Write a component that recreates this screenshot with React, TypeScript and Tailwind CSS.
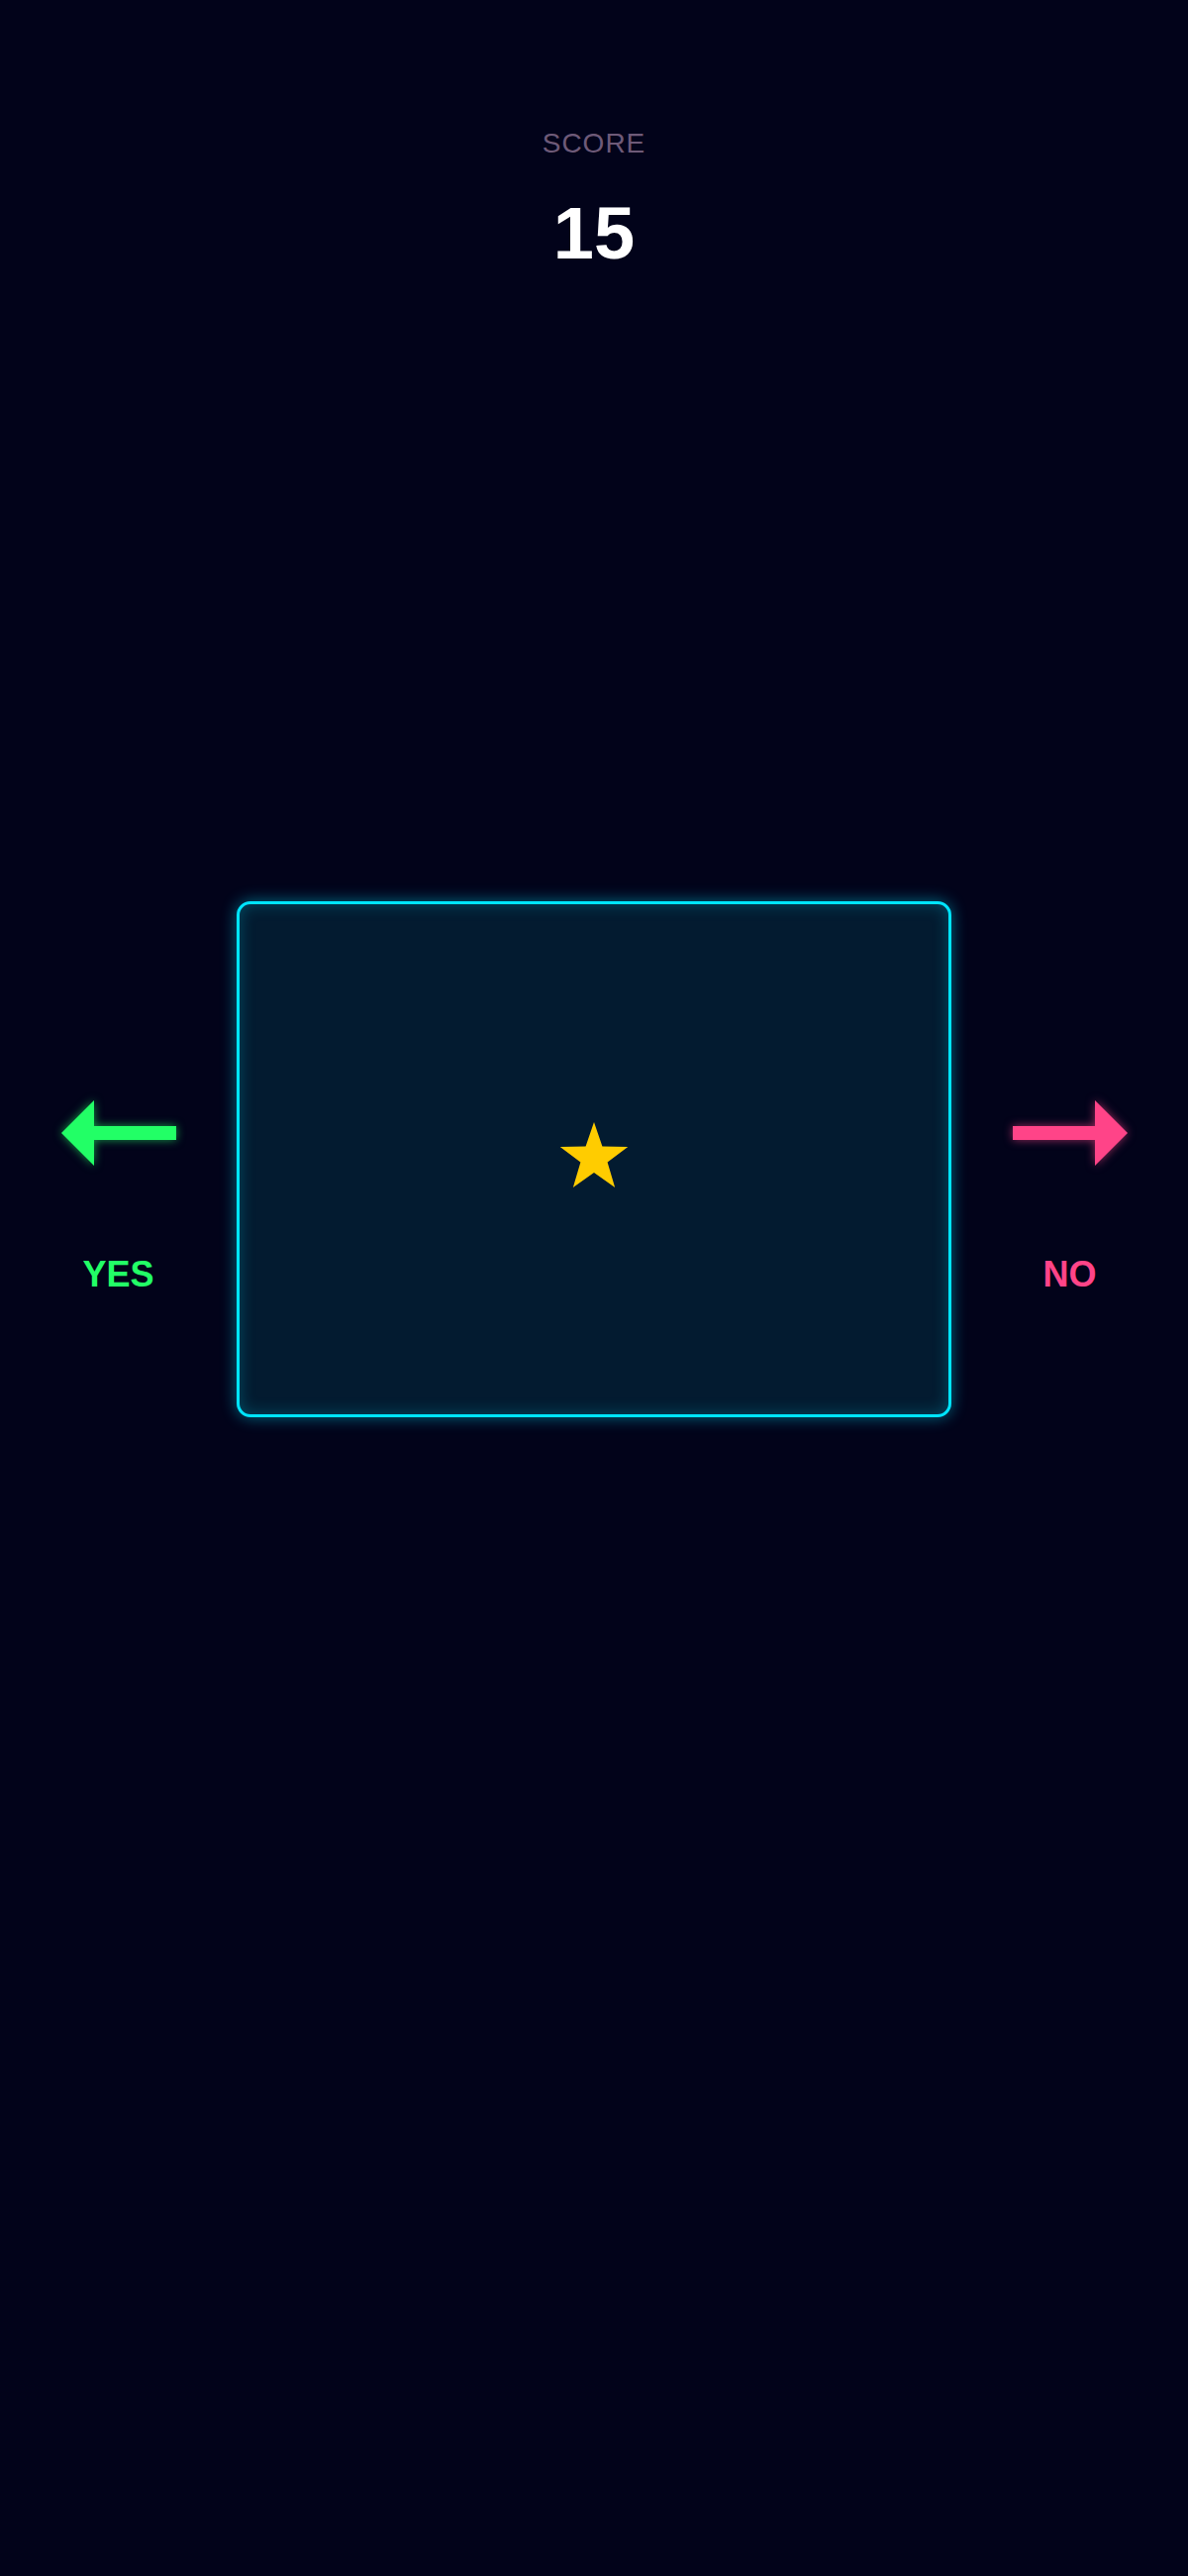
import React from "react";

function LeftArrow() {
  return (
    <svg
      width="116"
      height="66"
      viewBox="0 0 116 66"
      className="block"
      style={{ filter: "drop-shadow(0 0 5px rgba(34,255,102,0.6))" }}
    >
      <polygon points="0,33 33,0 33,26 116,26 116,40 33,40 33,66" fill="#22ff66" />
    </svg>
  );
}

function RightArrow() {
  return (
    <svg
      width="116"
      height="66"
      viewBox="0 0 116 66"
      className="block"
      style={{ filter: "drop-shadow(0 0 5px rgba(255,68,136,0.6))" }}
    >
      <polygon points="116,33 83,0 83,26 0,26 0,40 83,40 83,66" fill="#ff4488" />
    </svg>
  );
}

function Star() {
  return (
    <svg width="72" height="68" viewBox="0 0 72 68" className="block mb-[7px]">
      <polygon
        points="36,0 44.4,24.6 70.24,24.88 49.6,40.6 57.16,66 36,51 14.84,66 22.4,40.6 1.76,24.88 27.6,24.6"
        fill="#ffcc00"
      />
    </svg>
  );
}

export default function App() {
  return (
    <div
      className="min-h-[2601px] w-full bg-[#02031a] flex flex-col items-center"
      style={{ fontFamily: '"Liberation Sans", Arial, sans-serif' }}
    >
      <div className="pt-[131px] text-[28px] leading-none text-[#6e5a78] tracking-[1px]">SCORE</div>
      <div className="mt-[40px] text-[74px] leading-none font-bold text-white">15</div>

      <div className="mt-[637px] w-full flex flex-row items-center">
        <div className="w-[239px] flex flex-col items-center pt-[75px]">
          <LeftArrow />
          <div className="mt-[92px] text-[36px] leading-none font-bold text-[#22ff66]">YES</div>
        </div>
        <div className="w-[722px] h-[521px] rounded-[14px] border-[3px] border-[#00e5ff] bg-[#031b30] shadow-[0_0_16px_rgba(0,229,255,0.45),inset_0_0_16px_rgba(0,229,255,0.25)] flex items-center justify-center">
          <Star />
        </div>
        <div className="w-[239px] flex flex-col items-center pt-[75px]">
          <RightArrow />
          <div className="mt-[92px] text-[36px] leading-none font-bold text-[#ff4488]">NO</div>
        </div>
      </div>
    </div>
  );
}
